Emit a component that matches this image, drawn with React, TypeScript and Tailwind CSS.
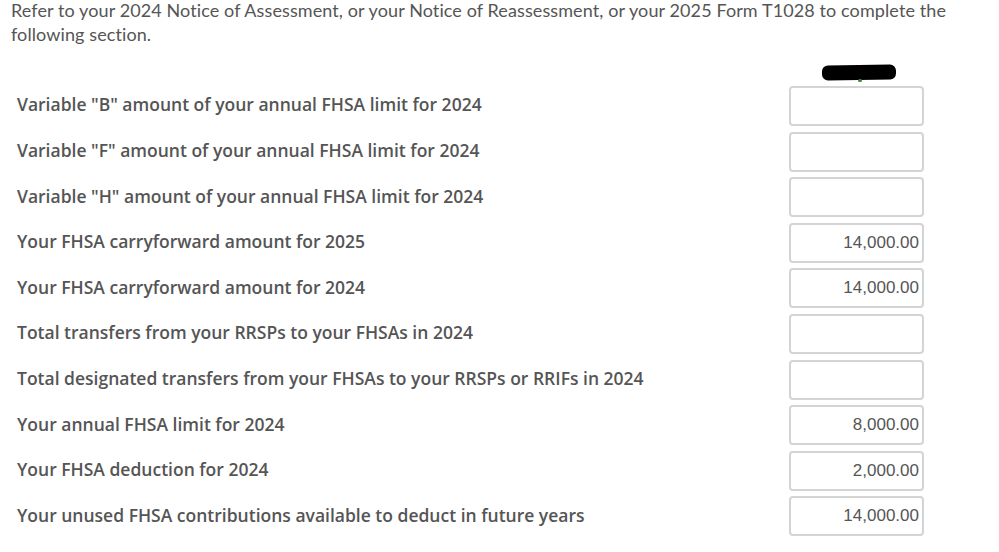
import React from 'react';

const rows: { label: string; value: string }[] = [
  { label: 'Variable "B" amount of your annual FHSA limit for 2024', value: '' },
  { label: 'Variable "F" amount of your annual FHSA limit for 2024', value: '' },
  { label: 'Variable "H" amount of your annual FHSA limit for 2024', value: '' },
  { label: 'Your FHSA carryforward amount for 2025', value: '14,000.00' },
  { label: 'Your FHSA carryforward amount for 2024', value: '14,000.00' },
  { label: 'Total transfers from your RRSPs to your FHSAs in 2024', value: '' },
  { label: 'Total designated transfers from your FHSAs to your RRSPs or RRIFs in 2024', value: '' },
  { label: 'Your annual FHSA limit for 2024', value: '8,000.00' },
  { label: 'Your FHSA deduction for 2024', value: '2,000.00' },
  { label: 'Your unused FHSA contributions available to deduct in future years', value: '14,000.00' },
];

const App: React.FC = () => {
  return (
    <div className="w-[999px] h-[552px] bg-white overflow-hidden font-['Lato',sans-serif] text-[#555]">
      {/* Intro */}
      <p className="pl-[11px] pr-[30px] text-[18px] leading-[24px] tracking-[0.1px] -mt-[2px]">
        Refer to your 2024 Notice of Assessment, or your Notice of Reassessment, or your 2025 Form T1028 to complete the
        following section.
      </p>

      {/* Column header (redacted) */}
      <div className="flex justify-end pr-[103px] mt-[19px] h-[21px]">
        <div className="relative w-[74px] h-[15px]">
          <div className="absolute inset-0 bg-black rounded-[6px] -rotate-1" />
          <div className="absolute left-[36px] top-[14px] w-[4px] h-[3px] rounded-full bg-[#3a8a3a]" />
        </div>
      </div>

      {/* Rows */}
      <div className="flex flex-col gap-[5.6px]">
        {rows.map((r) => (
          <div key={r.label} className="flex items-center h-[40px] pl-[17px] pr-[75px]">
            <span className="flex-1 pb-[3px] text-[17.5px] font-semibold text-[#555] font-['Open_Sans',sans-serif]">
              {r.label}
            </span>
            <input
              readOnly
              value={r.value}
              className="w-[135px] h-[40px] box-border border-2 border-[#d4d4d4] rounded-[4px] text-right pr-[3px] text-[17px] text-[#555] font-['Liberation_Sans',Arial,sans-serif] outline-none"
            />
          </div>
        ))}
      </div>
    </div>
  );
};

export default App;
